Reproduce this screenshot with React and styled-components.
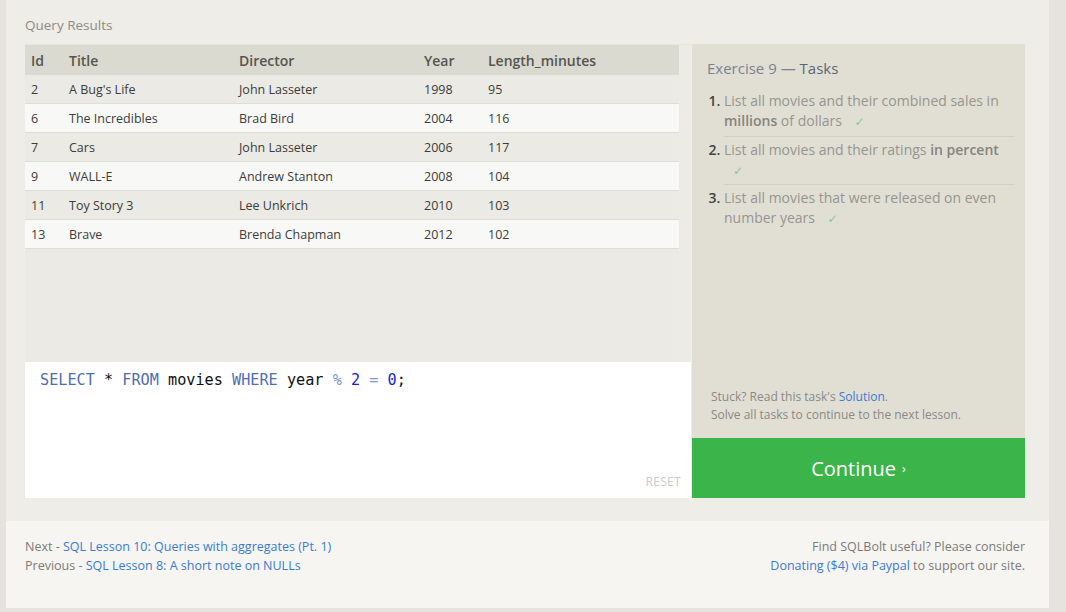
import styled, { createGlobalStyle } from "styled-components";

const GlobalStyle = createGlobalStyle`
  html, body {
    margin: 0;
    padding: 0;
    background: #e6e3df;
  }
  body {
    font-family: "Open Sans", "DejaVu Sans", sans-serif;
  }
`;

const movies = [
  [2, "A Bug's Life", "John Lasseter", 1998, 95],
  [6, "The Incredibles", "Brad Bird", 2004, 116],
  [7, "Cars", "John Lasseter", 2006, 117],
  [9, "WALL-E", "Andrew Stanton", 2008, 104],
  [11, "Toy Story 3", "Lee Unkrich", 2010, 103],
  [13, "Brave", "Brenda Chapman", 2012, 102],
];

const columns = ["Id", "Title", "Director", "Year", "Length_minutes"];

const App = () => {
  return (
    <>
      <GlobalStyle />
      <Page>
        <Main>
          <Caption>Query Results</Caption>
          <Workspace>
            <Left>
              <ResultsArea>
                <Results>
                  <HeadRow>
                    {columns.map((c) => (
                      <HeadCell key={c}>{c}</HeadCell>
                    ))}
                  </HeadRow>
                  {movies.map((m, i) => (
                    <Row key={m[0]} $odd={i % 2 === 1}>
                      {m.map((v, j) => (
                        <Cell key={j}>{v}</Cell>
                      ))}
                    </Row>
                  ))}
                </Results>
                <Gutter />
              </ResultsArea>
              <Editor>
                <Code>
                  <Kw>SELECT</Kw> * <Kw>FROM</Kw> movies <Kw>WHERE</Kw> year{" "}
                  <Op>%</Op> <Num>2</Num> <Op>=</Op> <Num>0</Num>;
                </Code>
                <Reset>RESET</Reset>
              </Editor>
            </Left>
            <Right>
              <Tasks>
                <TasksTitle>
                  Exercise 9 — <strong>Tasks</strong>
                </TasksTitle>
                <TaskList>
                  <Task>
                    List all movies and their combined sales in{" "}
                    <b>millions</b> of dollars <Check>✓</Check>
                  </Task>
                  <Task>
                    List all movies and their ratings <b>in percent</b>{" "}
                    <Check>✓</Check>
                  </Task>
                  <Task>
                    List all movies that were released on even number years{" "}
                    <Check>✓</Check>
                  </Task>
                </TaskList>
                <Hint>
                  <div>
                    Stuck? Read this task's <Link>Solution</Link>.
                  </div>
                  <div>Solve all tasks to continue to the next lesson.</div>
                </Hint>
              </Tasks>
              <Continue>
                Continue <Arrow>›</Arrow>
              </Continue>
            </Right>
          </Workspace>
        </Main>
        <Footer>
          <FooterCol>
            <div>
              Next - <Link>SQL Lesson 10: Queries with aggregates (Pt. 1)</Link>
            </div>
            <div>
              Previous - <Link>SQL Lesson 8: A short note on NULLs</Link>
            </div>
          </FooterCol>
          <FooterCol $right>
            <div>Find SQLBolt useful? Please consider</div>
            <div>
              <Link>Donating ($4) via Paypal</Link> to support our site.
            </div>
          </FooterCol>
        </Footer>
      </Page>
    </>
  );
};
export default App;

const Page = styled.div`
  margin-left: 6px;
  width: 1043px;
  height: 608px;
  display: flex;
  flex-direction: column;
  background: #efede7;
`;

const Main = styled.div`
  padding: 16px 24px 23px 19px;
  display: flex;
  flex-direction: column;
`;

const Caption = styled.div`
  font-size: 13.5px;
  color: #8d8b86;
  height: 19px;
  line-height: 19px;
  margin-bottom: 9px;
`;

const Workspace = styled.div`
  display: flex;
  height: 454px;
`;

const Left = styled.div`
  width: 666px;
  display: flex;
  flex-direction: column;
`;

const ResultsArea = styled.div`
  height: 317px;
  display: flex;
  background: #ebeae4;
  border-top: 1px solid #e6e5de;
`;

const Results = styled.div`
  width: 654px;
  display: flex;
  flex-direction: column;
`;

const Gutter = styled.div`
  flex: 1;
  background: #ecebe6;
`;

const grid = `
  display: grid;
  grid-template-columns: 38px 170px 185px 64px 1fr;
`;

const HeadRow = styled.div`
  ${grid}
  height: 30px;
  background: #dadad0;
  align-items: center;
`;

const HeadCell = styled.div`
  padding-left: 6px;
  font-size: 14px;
  font-weight: 600;
  color: #555550;
`;

const Row = styled.div`
  ${grid}
  height: 28px;
  align-items: center;
  border-bottom: 1px solid #deddd6;
  background: ${(p) => (p.$odd ? "#f8f8f7" : "#ebeae4")};
`;

const Cell = styled.div`
  padding-left: 6px;
  font-size: 12.5px;
  color: #3c3c3a;
`;

const Editor = styled.div`
  flex: 1;
  background: #fff;
  display: flex;
  flex-direction: column;
  justify-content: space-between;
  padding: 8px 10px 8px 15px;
`;

const Code = styled.div`
  font-family: "DejaVu Sans Mono", monospace;
  font-size: 15.2px;
  line-height: 20px;
  color: #111;
`;

const Kw = styled.span`
  color: #4f6db5;
`;

const Op = styled.span`
  color: #7a97d6;
`;

const Num = styled.span`
  color: #1d1dd1;
`;

const Reset = styled.div`
  align-self: flex-end;
  font-size: 12px;
  color: #cbcbc8;
  letter-spacing: 0.3px;
`;

const Right = styled.div`
  width: 333px;
  margin-left: 1px;
  display: flex;
  flex-direction: column;
`;

const Tasks = styled.div`
  flex: 1;
  background: #e1dfd4;
  padding: 14px 10px 14px 15px;
  display: flex;
  flex-direction: column;
`;

const TasksTitle = styled.div`
  font-size: 15px;
  color: #7a8193;
  margin-bottom: 10px;
  strong {
    font-weight: normal;
    color: #5d6678;
  }
`;

const TaskList = styled.ol`
  margin: 0;
  padding-left: 17px;
  flex: 1;
`;

const Task = styled.li`
  font-size: 14px;
  line-height: 20px;
  color: #96958f;
  padding: 3px 0 4px 0;
  border-bottom: 1px solid #d2d0c6;
  &:last-child {
    border-bottom: none;
  }
  &:nth-child(2) {
    padding-bottom: 3px;
  }
  &::marker {
    color: #444;
    font-weight: 600;
  }
  b {
    font-weight: 600;
    color: #85847e;
  }
`;

const Check = styled.span`
  color: #86c986;
  font-size: 12px;
  margin-left: 9px;
`;

const Hint = styled.div`
  font-size: 12px;
  line-height: 18px;
  color: #8a8984;
  padding-left: 4px;
`;

const Link = styled.span`
  color: #3a7bd5;
`;

const Continue = styled.div`
  height: 60px;
  background: #3bb54a;
  color: #fff;
  font-size: 20px;
  display: flex;
  align-items: center;
  justify-content: center;
`;

const Arrow = styled.span`
  font-size: 13px;
  margin-left: 6px;
`;

const Footer = styled.div`
  flex: 1;
  background: #f6f5f2;
  padding: 16px 24px 0 19px;
  display: flex;
  justify-content: space-between;
`;

const FooterCol = styled.div`
  font-size: 12.5px;
  line-height: 19px;
  color: #7c7b77;
  text-align: ${(p) => (p.$right ? "right" : "left")};
`;
